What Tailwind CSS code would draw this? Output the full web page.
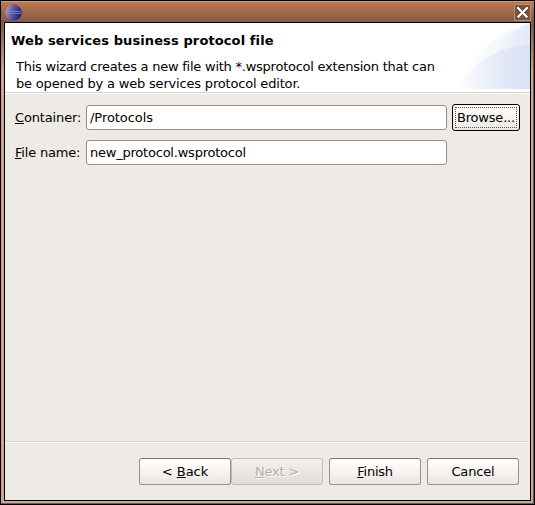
<!DOCTYPE html>
<html lang="en">
<head>
<meta charset="utf-8">
<title>Web services business protocol file</title>
<script src="https://cdn.jsdelivr.net/npm/@tailwindcss/browser@4"></script>
</head>
<body class="w-[535px] h-[505px] overflow-hidden bg-black font-['DejaVu_Sans',sans-serif] text-[13px] text-black">
<div class="flex flex-col w-[535px] h-[505px] border border-black bg-linear-to-b from-[#805a44] from-[22px] to-[#d0a48d] to-[70px] shadow-[inset_-1px_-1px_0_#80553f]">
  <div class="flex h-[21px] shrink-0 items-center justify-between border-t border-[#d59c7c] bg-linear-to-b from-[#be7850] to-[#805a44] pl-1 pr-[3px]">
    <svg class="size-[17px]" viewBox="0 0 17 17">
      <defs><linearGradient id="orb" x1="0" y1="0.3" x2="1" y2="0.6"><stop offset="0" stop-color="#c39ab5"/><stop offset=".4" stop-color="#6260ae"/><stop offset="1" stop-color="#18166b"/></linearGradient></defs>
      <circle cx="8.5" cy="8.5" r="8.2" fill="url(#orb)"/>
      <path d="M2 7.5h14M2 9.5h14" stroke="#7f8cc9" stroke-width="1" opacity=".75"/>
    </svg>
    <svg class="w-[17px] h-[17px]" viewBox="0 0 17 17">
      <rect x=".5" y=".5" width="16" height="16" fill="#765442" stroke="#b59380"/>
      <path d="M3.5 3.5L13.5 13.5M13.5 3.5L3.5 13.5" stroke="#fff" stroke-width="2.6" shape-rendering="crispEdges"/>
    </svg>
  </div>
  <div class="mx-[3px] mb-[3px] flex min-h-0 flex-1 flex-col border border-black bg-[#eeebe6]">
    <header class="relative h-[69px] shrink-0 bg-white">
      <svg class="absolute right-0 top-0 w-[75px] h-[66px]" viewBox="0 0 75 66">
        <defs>
          <linearGradient id="g1"><stop offset="0.1" stop-color="#fff"/><stop offset="1" stop-color="#ecf0fa"/></linearGradient>
          <linearGradient id="g2"><stop offset="0" stop-color="#dbe3f5" stop-opacity="0"/><stop offset="1" stop-color="#dae2f5"/></linearGradient>
        </defs>
        <path d="M0 66Q22 17 75 0V66Z" fill="url(#g1)"/>
        <path d="M36 40Q48 14 75 0V66H36Z" fill="url(#g2)" opacity=".5"/>
        <path d="M0 66Q28 25 75 21V66Z" fill="url(#g2)"/>
      </svg>
      <h1 class="relative pl-[6px] pt-[9px] text-[13px] leading-[17px] font-bold tracking-[0.11px] whitespace-nowrap">Web services business protocol file</h1>
      <p class="relative pl-[11px] pt-[9px] leading-[17px] whitespace-nowrap"><span class="tracking-[-0.24px]">This wizard creates a new file with *.wsprotocol extension that can</span><br><span class="tracking-[-0.18px]">be opened by a web services protocol editor.</span></p>
    </header>
    <div class="h-[2px] shrink-0 border-t border-[#d8cfca] bg-white"></div>
    <main class="flex flex-1 flex-col gap-[9px] pl-[10px] pt-[10px]">
      <div class="flex h-[27px] items-center">
        <label class="w-[71px] tracking-[-0.15px] whitespace-nowrap"><span class="underline underline-offset-1 decoration-1">C</span>ontainer:</label>
        <div class="h-[25px] w-[361px] rounded-[3px] border border-[#9e8f80] bg-white pl-[3px] leading-[23px] tracking-[-0.05px]">/Protocols</div>
        <button class="ml-[5px] h-[27px] w-[68px] rounded-[3px] border border-black bg-linear-to-b from-white to-[#eee8e3] p-[2px] tracking-[-0.2px]"><span class="flex h-full items-center justify-center border border-dotted border-[#5f554e] whitespace-nowrap">Browse...</span></button>
      </div>
      <div class="flex h-[25px] items-center">
        <label class="w-[71px] tracking-[-0.2px] whitespace-nowrap"><span class="underline underline-offset-1 decoration-1">F</span>ile name:</label>
        <div class="h-[25px] w-[361px] rounded-[3px] border border-[#9e8f80] bg-white pl-[3px] leading-[23px] tracking-[-0.22px]">new_protocol.wsprotocol</div>
      </div>
    </main>
    <div class="h-[2px] shrink-0 border-t border-[#d8cfca] bg-white"></div>
    <footer class="flex h-[57px] shrink-0 justify-end pt-[15px] pr-[11px]">
      <button class="h-[27px] w-[92px] rounded-[3px] border border-[#a0907f] border-t-[#8a7969] bg-linear-to-b from-white via-[#f7f4f1] to-[#ece3dd]">&lt; <span class="underline underline-offset-1 decoration-1">B</span>ack</button>
      <button class="h-[27px] w-[92px] rounded-[3px] border border-[#c9baae] bg-linear-to-b from-[#f3f0ed] to-[#e3ddd8] tracking-[-0.2px] text-[#b5afa9] [text-shadow:1px_1px_0_white]" disabled><span class="underline underline-offset-1 decoration-1">N</span>ext &gt;</button>
      <button class="ml-[6px] h-[27px] w-[92px] rounded-[3px] border border-[#a0907f] border-t-[#8a7969] bg-linear-to-b from-white via-[#f7f4f1] to-[#ece3dd] tracking-[-0.25px]"><span class="underline underline-offset-1 decoration-1">F</span>inish</button>
      <button class="ml-[6px] h-[27px] w-[92px] rounded-[3px] border border-[#a0907f] border-t-[#8a7969] bg-linear-to-b from-white via-[#f7f4f1] to-[#ece3dd] tracking-[-0.15px]">Cancel</button>
    </footer>
  </div>
</div>
</body>
</html>
